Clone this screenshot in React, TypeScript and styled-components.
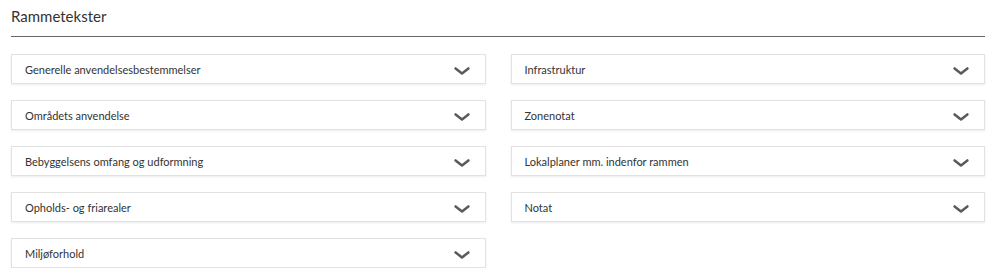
import React, { ReactElement } from 'react';
import styled, { createGlobalStyle } from 'styled-components';

const leftItems = [
  'Generelle anvendelsesbestemmelser',
  'Områdets anvendelse',
  'Bebyggelsens omfang og udformning',
  'Opholds- og friarealer',
  'Miljøforhold',
];

const rightItems = [
  'Infrastruktur',
  'Zonenotat',
  'Lokalplaner mm. indenfor rammen',
  'Notat',
];

const Chevron = (): ReactElement => (
  <Icon width="16" height="8" viewBox="0 0 16 8" fill="none">
    <path d="M1.6 1.4 L8 6.4 L14.4 1.4" stroke="#5a5a5a" strokeWidth="2.5" strokeLinecap="round" strokeLinejoin="round" />
  </Icon>
);

const Section = ({ title }: { title: string }): ReactElement => (
  <Card>
    <Label>{title}</Label>
    <Chevron />
  </Card>
);

const App = (): ReactElement => (
  <>
    <GlobalStyle />
    <Wrapper>
      <Title>Rammetekster</Title>
      <Grid>
        <Column>
          {leftItems.map((item) => (
            <Section title={item} key={item} />
          ))}
        </Column>
        <Column>
          {rightItems.map((item) => (
            <Section title={item} key={item} />
          ))}
        </Column>
      </Grid>
    </Wrapper>
  </>
);

const GlobalStyle = createGlobalStyle`
  body {
    margin: 0;
    background: #fff;
    font-family: Lato, 'Open Sans', sans-serif;
  }
`;

const Wrapper = styled.main`
  padding: 0 7px 0 11px;
`;

const Title = styled.h2`
  margin: 0;
  padding: 7px 0 0;
  height: 29px;
  font-size: 15px;
  font-weight: 400;
  color: #333;
  border-bottom: 1px solid #666;
`;

const Grid = styled.div`
  display: grid;
  grid-template-columns: 1fr 1fr;
  grid-gap: 25px;
  margin-top: 17px;
`;

const Column = styled.div`
  display: flex;
  flex-direction: column;
  gap: 16px;
`;

const Card = styled.div`
  display: flex;
  align-items: center;
  justify-content: space-between;
  height: 30px;
  box-sizing: border-box;
  padding: 0 15px 0 13px;
  border: 1px solid #e2e2e2;
  box-shadow: 0 1px 2px rgba(0, 0, 0, 0.08);
  background: #fff;
`;

const Label = styled.span`
  font-size: 11px;
  color: #333;
`;

const Icon = styled.svg`
  margin-top: 3px;
`;

export default App;
